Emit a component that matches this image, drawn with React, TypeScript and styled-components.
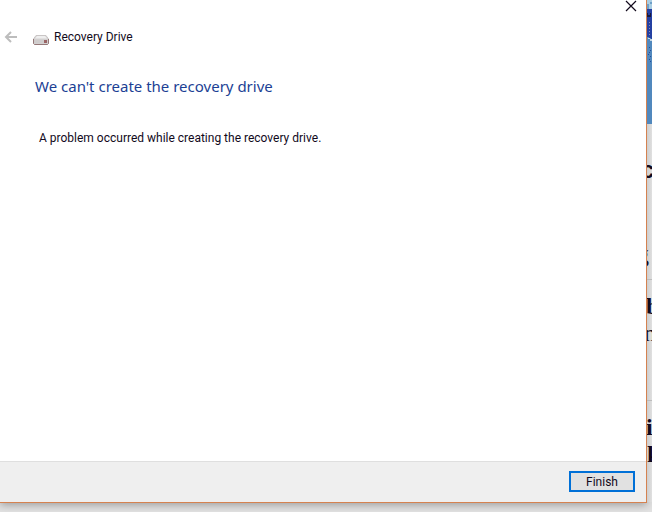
import React from "react";
import styled, { createGlobalStyle } from "styled-components";

const GlobalStyle = createGlobalStyle`
  * { box-sizing: border-box; }
  body { margin: 0; background: #e2e2e2; }
`;

const Desktop = styled.div`
  display: grid;
  grid-template-columns: minmax(0, 1fr) 5px;
  min-height: 100vh;
  padding-bottom: 9px;
  background: #e2e2e2;
  overflow: hidden;
  font-family: Roboto, "Noto Sans", sans-serif;
  font-size: 12px;
  color: #120a1c;
`;

const Dialog = styled.main`
  display: flex;
  flex-direction: column;
  background: #ffffff;
  border: solid #d58250;
  border-width: 0 1px 1px 0;
  box-shadow: 0 2px 8px rgba(0, 0, 0, 0.3);
`;

const TitleBar = styled.div`
  display: flex;
  justify-content: flex-end;
  height: 24px;
  padding-right: 9px;
`;

const IconButton = styled.button`
  display: flex;
  padding: 0;
  border: 0;
  background: none;
  color: inherit;
  &:disabled { color: #bdbdbd; }
`;

const Header = styled.header`
  display: flex;
  align-items: center;
  height: 25px;
  padding-left: 4px;
`;

const DriveIcon = styled.svg`
  margin: 6px 5px 0 15px;
`;

const Content = styled.section`
  flex: 1;
  padding: 25px 35px;
`;

const Heading = styled.h1`
  margin: 0;
  font-family: "Noto Sans", sans-serif;
  font-size: 15px;
  line-height: 24px;
  font-weight: 400;
  color: #1c3f94;
`;

const Message = styled.p`
  margin: 30px 4px 0;
  line-height: 20px;
`;

const Footer = styled.footer`
  display: flex;
  justify-content: flex-end;
  padding: 9px 11px 10px;
  background: #efefef;
  border-top: 1px solid #dfdfdf;
`;

const FinishButton = styled.button`
  width: 66px;
  height: 21px;
  padding: 0;
  border: 2px solid #0070d7;
  background: #e1e1e1;
  color: inherit;
  font: inherit;
  line-height: 16px;
`;

const PageEdge = styled.aside`
  min-width: 0;
  height: 502px;
  overflow: hidden;
  background: linear-gradient(90deg, #cecece, #e0e0e0);
`;

const Artwork = styled.svg`
  display: block;
`;

const Letter = styled.div<{ $height: number; $shift?: number; $top?: number; $bold?: boolean; $sans?: boolean; $ruled?: boolean }>`
  height: ${(p) => p.$height}px;
  padding-top: ${(p) => p.$top ?? 0}px;
  text-indent: ${(p) => p.$shift ?? 0}px;
  border-bottom: ${(p) => (p.$ruled ? "1px solid #bdbdbd" : "0")};
  font-family: ${(p) => (p.$sans ? '"Liberation Sans", sans-serif' : '"Liberation Serif", serif')};
  font-weight: ${(p) => (p.$bold ? 700 : 400)};
  font-size: 24px;
  line-height: 24px;
`;

export default function App() {
  return (
    <>
      <GlobalStyle />
      <Desktop>
        <Dialog>
          <TitleBar>
            <IconButton aria-label="Close">
              <svg width="12" height="12" viewBox="0 0 12 12" stroke="currentColor" strokeWidth="1.2">
                <path d="M1 1L11 11M11 1L1 11" />
              </svg>
            </IconButton>
          </TitleBar>
          <Header>
            <IconButton aria-label="Back" disabled>
              <svg width="14" height="14" viewBox="0 0 14 14" fill="none" stroke="currentColor" strokeWidth="2">
                <path d="M13 7H2M7 2L2 7L7 12" />
              </svg>
            </IconButton>
            <DriveIcon width="16" height="10" viewBox="0 0 16 10" aria-hidden="true">
              <path d="M3 .5H13L15.5 4V8.5L14.5 9.5H1.5L.5 8.5V4Z" fill="#d6d3d3" stroke="#c9c5c5" />
              <path d="M4 1H12L14 3.5H2Z" fill="#eeeeee" />
              <path d="M1 4.5H15V8.5H1Z" fill="#cfcccc" />
              <path d="M.5 4V8.5L1.5 9.5H14.5L15.5 8.5V4" fill="none" stroke="#957878" />
              <path d="M11 5H14V8H11Z" fill="#9a6465" />
            </DriveIcon>
            <span>Recovery Drive</span>
          </Header>
          <Content>
            <Heading>We can't create the recovery drive</Heading>
            <Message>A problem occurred while creating the recovery drive.</Message>
          </Content>
          <Footer>
            <FinishButton>Finish</FinishButton>
          </Footer>
        </Dialog>
        <PageEdge aria-hidden="true">
          <Artwork width="5" height="158" viewBox="0 0 5 158" shapeRendering="crispEdges">
            <path d="M0 0H5V124H0Z" fill="#5188bd" />
            <path d="M0 0H5V9H0Z" fill="#a9cde2" />
            <path d="M0 4H2V9H0ZM3 2H5V4H3Z" fill="#6d9fc8" />
            <path d="M0 9H5V40H4V38H2V37H0Z" fill="#2440a2" />
            <path d="M0 13H1V15H3V13H4V17H0Z" fill="#181a40" />
            <path d="M2.5 22V36" stroke="#8d8bb0" strokeDasharray="1 2" />
            <path d="M1 38H3V39H5V41H3V39H1Z" fill="#c2d6e4" />
            <path d="M2 47H3V48H2ZM3 50H4V51H3ZM2 52H3V53H2ZM1 54H2V55H1ZM3 56H4V57H3ZM2 59H3V60H2ZM3 61H4V62H3Z" fill="#234d9d" />
          </Artwork>
          <Letter $height={84} $shift={-6} $bold $sans>c</Letter>
          <Letter $height={38} $shift={-10} $ruled>g</Letter>
          <Letter $height={41} $top={14} $shift={-1} $bold>b</Letter>
          <Letter $height={80} $shift={-3} $ruled>n</Letter>
          <Letter $height={41} $top={14} $shift={-1} $bold>i</Letter>
          <Letter $height={27} $bold>k</Letter>
        </PageEdge>
      </Desktop>
    </>
  );
}
